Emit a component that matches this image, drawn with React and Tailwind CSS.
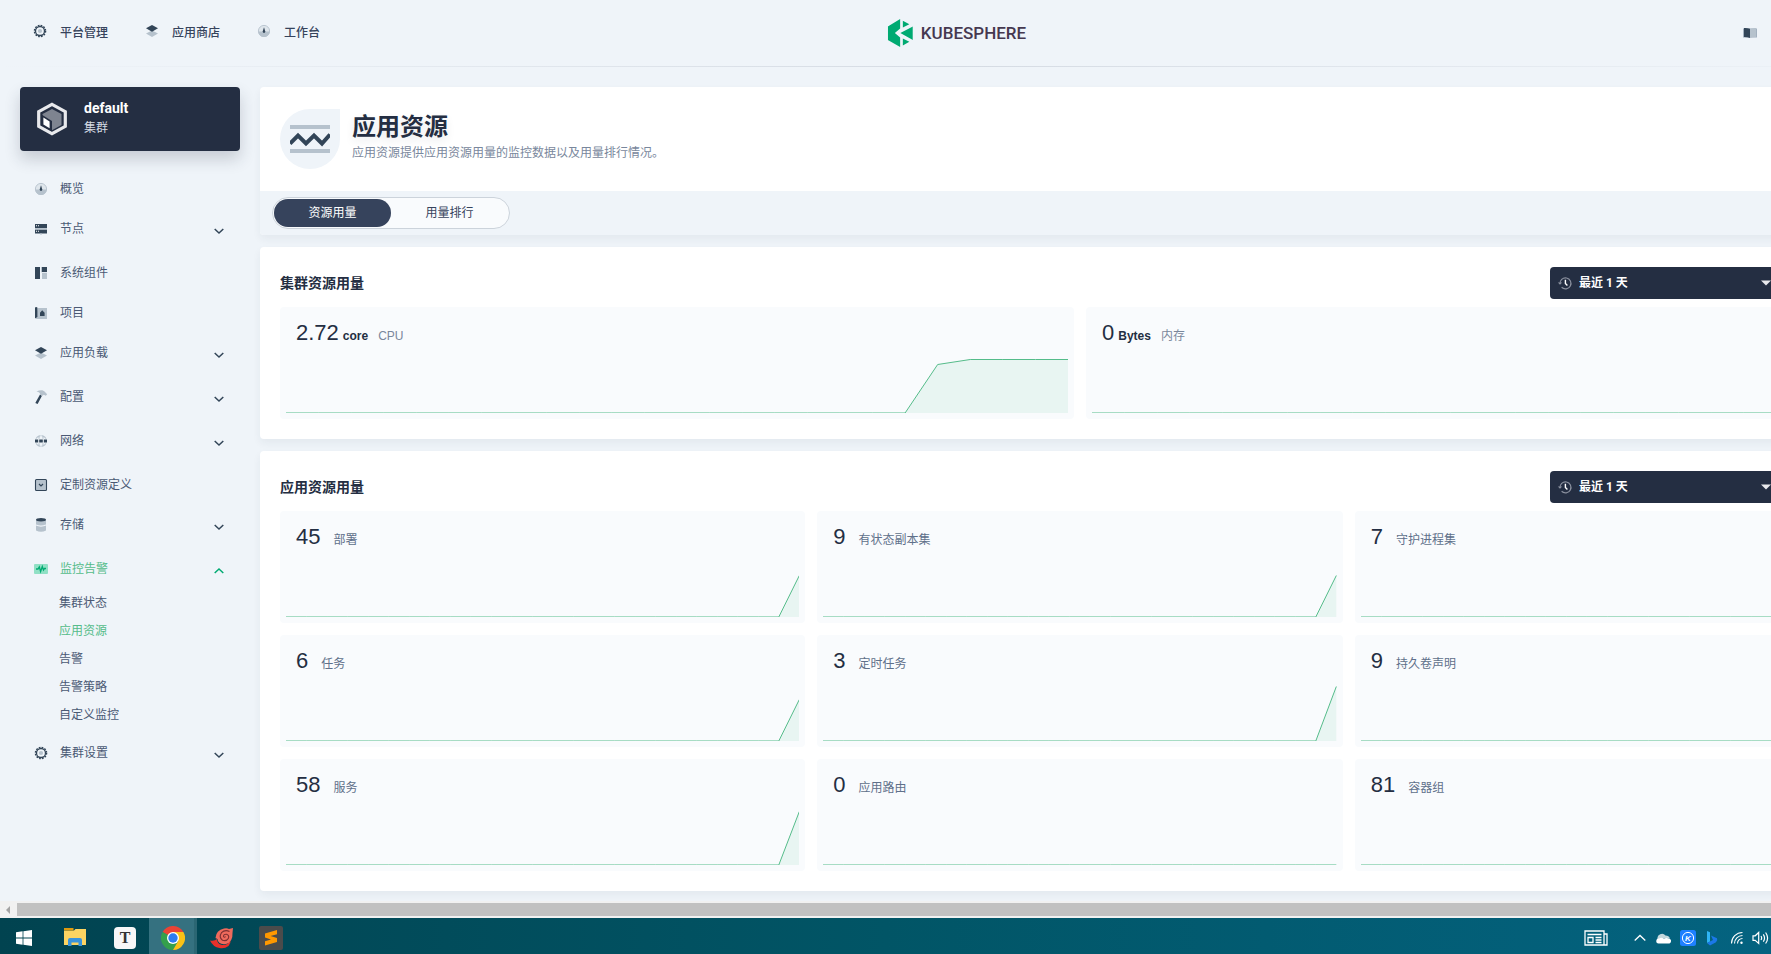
const PAGE_FONT = "font-[Roboto,'Noto_Sans_CJK_SC',sans-serif]";

/* ---------- icons ---------- */
function Gear() {
  return (
    <svg viewBox="0 0 16 16" className="size-4" aria-hidden="true">
      <circle cx="8" cy="8" r="5.6" fill="none" stroke="#324558" strokeWidth="1.4" strokeDasharray="1.7 1.23" />
      <circle cx="8" cy="8" r="4.5" fill="#eff4f9" stroke="#324558" strokeWidth="1.3" />
      <circle cx="8" cy="8" r="2.1" fill="#b6c2cd" />
    </svg>
  );
}
function Layers() {
  return (
    <svg viewBox="0 0 16 16" className="size-4" aria-hidden="true">
      <path d="M2 10.5 8 7.5l6 3L8 14z" fill="#b6c2cd" />
      <path d="M2 5.3 8 2l6 3.3L8 8.8z" fill="#324558" />
    </svg>
  );
}
function Dashboard() {
  return (
    <svg viewBox="0 0 16 16" className="size-4" aria-hidden="true">
      <circle cx="8" cy="8" r="5.6" fill="#dfe6ec" stroke="#b6c2cd" strokeWidth="0.9" />
      <path d="M2.2 8.6h11.6A5.8 5.8 0 0 1 8 14a5.8 5.8 0 0 1-5.8-5.4z" fill="#b6c2cd" />
      <path d="M8 4.2 9.3 8.6a1.3 1.3 0 1 1-2.6 0z" fill="#324558" />
    </svg>
  );
}
function Nodes() {
  return (
    <svg viewBox="0 0 16 16" className="size-4" aria-hidden="true">
      <path d="M2 3h12v4H2zM2 8.500h12v4H2z" fill="#324558" />
      <path d="M2 7h12v1.500H2zM7 12.500h2v1H7z" fill="#b6c2cd" />
      <path d="M3 4.2h1v1H3zM5 4.2h1v1H5zM3 9.800h1v1H3zM5 9.800h1v1H5z" fill="#fff" />
    </svg>
  );
}
function Components() {
  return (
    <svg viewBox="0 0 16 16" className="size-4" aria-hidden="true">
      <path d="M2 2h5v12H2zM9 2h5v5H9z" fill="#324558" />
      <path d="M7 2h2v5h5v7H9V8H7z" fill="#b6c2cd" />
      <path d="M7 2h1v12H7zM8 7.2h6v.8H8z" fill="#eff4f9" />
    </svg>
  );
}
function Project() {
  return (
    <svg viewBox="0 0 16 16" className="size-4" aria-hidden="true">
      <path d="M4.500 3H14v11H3z" fill="#b6c2cd" />
      <path d="M2 2.600q1.200-1 2.400 0V12L2 13.400zM9.200 5.200l2.400 2.600V11H7V7.800z" fill="#324558" />
    </svg>
  );
}
function Hammer() {
  return (
    <svg viewBox="0 0 16 16" className="size-4" aria-hidden="true">
      <path d="m7 5.600 2 1.200L4.600 15l-2.300-1z" fill="#324558" />
      <path d="M3.500 2.600C7 .8 10.500 1 12 3l2.200 2.200-1.400 1.600-2-1-1.800 1.200L7 5.600q.5-2-3.500-3z" fill="#b6c2cd" />
    </svg>
  );
}
function Network() {
  return (
    <svg viewBox="0 0 16 16" className="size-4" aria-hidden="true">
      <circle cx="8" cy="8" r="5.400" fill="none" stroke="#b6c2cd" strokeWidth="1.100" />
      <path d="M6 3v10M10 3v10" stroke="#b6c2cd" strokeWidth="1.100" />
      <path d="M8 1.500v13" stroke="#eff4f9" strokeWidth="1" />
      <path d="M1 8h14" stroke="#eff4f9" strokeWidth="4.600" />
      <path d="M2 6.400h3.200v3.200H2zM6.200 6.400h3.600v3.200H6.200zM10.800 6.400H14v3.200h-3.200z" fill="#324558" />
    </svg>
  );
}
function Custom() {
  return (
    <svg viewBox="0 0 16 16" className="size-4" aria-hidden="true">
      <rect x="2.500" y="2.500" width="11" height="11" rx="1" fill="#b6c2cd" stroke="#324558" strokeWidth="1.100" />
      <path d="m6 7 2 2 2-2" fill="none" stroke="#324558" strokeWidth="1.200" />
    </svg>
  );
}
function Storage() {
  return (
    <svg viewBox="0 0 16 16" className="size-4" aria-hidden="true">
      <path d="M3 3v10.500q5 2.400 10 0V3z" fill="#b6c2cd" />
      <path d="M3 8q5 2.200 10 0" fill="none" stroke="#eff4f9" strokeWidth="1.100" />
      <ellipse cx="8" cy="2.800" rx="5" ry="1.700" fill="#324558" />
    </svg>
  );
}
function Monitor() {
  return (
    <svg viewBox="0 0 16 16" className="size-4" aria-hidden="true">
      <rect x="1" y="3" width="14" height="10" rx="1" fill="#90e0c5" />
      <path d="M3 8h2l1.300-2.200L7.600 10.500 9.300 5.500l1.200 3.500 1-1.500H13" fill="none" stroke="#00aa72" strokeWidth="1.300" />
    </svg>
  );
}
function Book() {
  return (
    <svg viewBox="0 0 16 16" className="size-4" aria-hidden="true">
      <path d="M1 3.500h14v9H1z" fill="#a3b1c0" />
      <path d="M2 3q3.500-.2 6 .8V13q-2.500-1-6-1z" fill="#324558" />
      <path d="M14 3q-3.500-.2-6 .8V13q2.500-1 6-1z" fill="#b6c2cd" />
    </svg>
  );
}
function Chevron({ up }) {
  return (
    <svg viewBox="0 0 16 16" className="size-4" fill="none" strokeWidth="1.500" aria-hidden="true">
      {up ? <path d="m3.700 10 4.300-4 4.300 4" stroke="#00aa72" /> : <path d="m3.700 6 4.300 4 4.300-4" stroke="#324558" />}
    </svg>
  );
}
function ClusterIcon() {
  return (
    <svg viewBox="0 0 32 36" className="h-9 w-8" aria-hidden="true">
      <path d="M16 3.300 29.300 10.600v14.800L16 32.700 2.700 25.400V10.600z" fill="#242e42" stroke="#e8e9ec" strokeWidth="3.200" />
      <path d="M16 8 25.500 13v11L16 29.200 6.500 24V13z" fill="#7e8490" />
      <path d="M5.500 13.500 16 20v10.500L5.500 24.500z" fill="#242e42" />
      <path d="m7.400 16.600 6.200 3.800v6.800l-6.200-3.600z" fill="#fff" />
    </svg>
  );
}
function HistoryClock() {
  return (
    <svg viewBox="0 0 16 16" className="size-4" fill="none" aria-hidden="true">
      <path d="M3 9A5.500 5.500 0 1 1 4.600 12.300" stroke="#8a909e" strokeWidth="1.200" />
      <path d="M.8 7.400h4.400L3 9.800z" fill="#8a909e" />
      <path d="M8.400 4.800v3.700l2 2" stroke="#fff" strokeWidth="1.400" />
    </svg>
  );
}

/* ---------- data ---------- */
const TOP_LINKS = [
  { label: "平台管理", Icon: Gear },
  { label: "应用商店", Icon: Layers },
  { label: "工作台", Icon: Dashboard },
];
const NAV = [
  { label: "概览", Icon: Dashboard },
  { label: "节点", Icon: Nodes, more: true },
  { label: "系统组件", Icon: Components },
  { label: "项目", Icon: Project },
  { label: "应用负载", Icon: Layers, more: true },
  { label: "配置", Icon: Hammer, more: true },
  { label: "网络", Icon: Network, more: true },
  { label: "定制资源定义", Icon: Custom },
  { label: "存储", Icon: Storage, more: true },
  {
    label: "监控告警",
    Icon: Monitor,
    more: true,
    open: true,
    children: ["集群状态", "应用资源", "告警", "告警策略", "自定义监控"],
  },
  { label: "集群设置", Icon: Gear, more: true },
];
const flat = (n) => Array(n).fill(0);
const CLUSTER_STATS = [
  { value: "2.72", unit: "core", label: "CPU", points: [...flat(20), 48.5, 53.5, 53.5, 53.5, 53.5] },
  { value: "0", unit: "Bytes", label: "内存", points: flat(25) },
];
const APP_STATS = [
  { value: "45", label: "部署", points: [...flat(25), 41.5] },
  { value: "9", label: "有状态副本集", points: [...flat(25), 41.5] },
  { value: "7", label: "守护进程集", points: [...flat(25), 41.5] },
  { value: "6", label: "任务", points: [...flat(25), 41.5] },
  { value: "3", label: "定时任务", points: [...flat(25), 54.5] },
  { value: "9", label: "持久卷声明", points: [...flat(25), 41.5] },
  { value: "58", label: "服务", points: [...flat(25), 53.5] },
  { value: "0", label: "应用路由", points: flat(26) },
  { value: "81", label: "容器组", points: [...flat(25), 53.5] },
];

/* ---------- pieces ---------- */
function Sparkline({ points }) {
  const step = 100 / (points.length - 1);
  const line = points.map((v, i) => `${i * step},${60 - v}`).join(" ");
  return (
    <svg viewBox="0 0 100 60" preserveAspectRatio="none" className="h-[60px] w-full overflow-hidden" aria-hidden="true">
      <polygon points={`0,60 ${line} 100,60`} fill="#e8f5f2" />
      <polyline points={line} fill="none" stroke="#55bc8a" strokeWidth="1" vectorEffect="non-scaling-stroke" />
    </svg>
  );
}

function StatCard({ value, unit, label, points }) {
  return (
    <div className="flex h-28 flex-col justify-between rounded-sm bg-[#f9fbfd] px-1.5 pt-3 pb-1.5">
      <div className="flex items-baseline px-2.5 font-['Liberation_Sans','Noto_Sans_CJK_SC',sans-serif] text-xs">
        <span className="text-[22px] leading-7 text-[#242e42]">{value}</span>
        {unit && <span className="ml-1 font-bold text-[#242e42]">{unit}</span>}
        <span className={unit ? "ml-2.5 text-[#79879c]" : "ml-[13px] text-[#5f708a]"}>{label}</span>
      </div>
      <Sparkline points={points} />
    </div>
  );
}

function Panel({ title, id, stats, columns }) {
  return (
    <section className="rounded bg-white p-5 shadow-[0_4px_8px_0_rgba(36,46,66,0.06)]">
      <div className="mb-2 flex items-center justify-between">
        <h2 className="text-sm font-bold text-[#242e42]">{title}</h2>
        <label htmlFor={id} className="flex h-8 w-[330px] items-center gap-1.5 rounded bg-[#242e42] pr-[109px] pl-[7px]">
          <HistoryClock />
          <select id={id} aria-label={`${title}时间范围`} className="flex-1 appearance-none bg-transparent text-xs font-bold text-white outline-none">
            <option>最近 1 天</option>
          </select>
          <svg viewBox="0 0 10 6" className="h-1.5 w-2.5" aria-hidden="true">
            <path d="M0 .5h10L5 5.500z" fill="#e8e9ec" />
          </svg>
        </label>
      </div>
      <div className={`grid gap-3 ${columns}`}>
        {stats.map((s) => (
          <StatCard key={s.label} {...s} />
        ))}
      </div>
    </section>
  );
}

function Sidebar() {
  return (
    <aside className="w-[220px] shrink-0">
      <button className="flex h-16 w-full items-center gap-4 rounded bg-[#242e42] pl-4 text-left shadow-[0_8px_16px_0_rgba(36,46,66,0.2)]">
        <ClusterIcon />
        <span className="flex flex-col pb-0.5">
          <span className="text-sm leading-5 font-bold text-white">default</span>
          <span className="text-xs leading-5 text-[#d5dbe3]">集群</span>
        </span>
      </button>
      <nav className="mt-[18px] text-xs text-[#4a5974]">
        {NAV.map(({ label, Icon, more, open, children }) => (
          <div key={label}>
            <a href="#" className={`flex items-center px-[13px] ${open ? "h-10 text-[#55bc8a]" : more ? "h-11 pb-1" : "h-10"}`}>
              <Icon />
              <span className="ml-[11px] flex-1">{label}</span>
              {more && (
                <span className="pt-1">
                  <Chevron up={open} />
                </span>
              )}
            </a>
            {children && (
              <div className="flex flex-col pb-1 pl-[39px]">
                {children.map((c) => (
                  <a key={c} href="#" className={`h-7 leading-7 ${c === "应用资源" ? "text-[#55bc8a]" : ""}`}>
                    {c}
                  </a>
                ))}
              </div>
            )}
          </div>
        ))}
      </nav>
    </aside>
  );
}

function Logo() {
  return (
    <a href="#" aria-label="KubeSphere" className="flex items-center gap-2">
      <svg viewBox="0 0 25 28" className="h-7 w-[25px]" aria-hidden="true">
        <path d="M0 7.500 12.300 0v9.500L7 14l5.300 4.500V28L0 21z" fill="#00aa72" />
        <path d="M15 1.700 21.500 5.300 15 8.500zM25 7.500v13.500L12.500 14zM15 19.500l6.500 3.200L15 26.500z" fill="#00aa72" />
      </svg>
      <span className="font-['Liberation_Sans_Narrow',Roboto,sans-serif] text-[17px] leading-7 font-medium text-[#453850]">KUBESPHERE</span>
    </a>
  );
}

function TopBar() {
  return (
    <header className="relative flex h-[67px] items-center justify-between pr-[162px] pb-0.5 pl-8">
      <nav className="flex gap-9 text-xs font-medium text-[#36435c]">
        {TOP_LINKS.map(({ label, Icon }) => (
          <a key={label} href="#" className="flex items-start gap-3">
            <Icon />
            <span className="leading-5">{label}</span>
          </a>
        ))}
      </nav>
      <div className="absolute left-1/2 -translate-x-1/2 pr-1.5">
        <Logo />
      </div>
      <a href="#" aria-label="文档">
        <Book />
      </a>
      <div className="absolute inset-x-0 bottom-0 h-px bg-linear-to-r from-transparent via-[#d5dbe3] to-transparent" />
    </header>
  );
}

function PageHeader() {
  return (
    <section className="overflow-hidden rounded bg-white shadow-[0_4px_8px_0_rgba(36,46,66,0.06)]">
      <div className="flex h-[104px] items-center gap-3 px-5">
        <div className="flex size-[60px] items-center justify-center rounded-full rounded-tr-none bg-[#eff4f9]">
          <svg viewBox="0 0 40 40" className="size-10" aria-hidden="true">
            <path d="M0 6h40v4H0zM0 30h40v4H0z" fill="#b6c2cd" />
            <path d="m0 24.500 8-8 8 8 8-8 8 8 8-9" fill="none" stroke="#324558" strokeWidth="4" />
          </svg>
        </div>
        <div className="pb-1">
          <h1 className="text-2xl leading-8 font-bold text-[#242e42] [text-shadow:0_4px_8px_rgba(36,46,66,0.1)]">应用资源</h1>
          <p className="text-xs leading-5 text-[#79879c]">应用资源提供应用资源用量的监控数据以及用量排行情况。</p>
        </div>
      </div>
      <div className="flex h-11 items-center bg-[#eff4f9] px-3">
        <div className="flex h-8 items-center rounded-full border border-[#ccd3db] bg-[#f9fbfd] px-px text-xs text-[#36435c]">
          <button className="h-7 w-[117px] rounded-full bg-[#36435c] text-white">资源用量</button>
          <button className="h-7 w-[117px] rounded-full">用量排行</button>
        </div>
      </div>
    </section>
  );
}

function HorizontalScrollbar() {
  return (
    <div className="flex h-[17px] shrink-0 items-center bg-[#f1f1f1]" aria-hidden="true">
      <svg viewBox="0 0 17 14" className="h-[14px] w-[17px]">
        <path d="M10 3v8L6 7z" fill="#a3a3a3" />
      </svg>
      <div className="h-[13px] flex-1 bg-[#c1c1c1]" />
    </div>
  );
}

function Taskbar() {
  return (
    <footer className="flex h-9 shrink-0 items-center justify-between bg-linear-to-r from-[#014350] via-[#015566] to-[#046380]">
      <div className="flex h-full items-center">
        <button aria-label="开始" className="flex h-full w-12 items-center justify-center pt-1">
          <svg viewBox="0 0 16 16" className="size-4" fill="#fff">
            <path d="M0 2.300 6.600 1.300v6.300H0zM7.400 1.200 16 0v7.600H7.400zM0 8.400h6.600v6.300L0 13.700zM7.400 8.400H16V16l-8.600-1.200z" />
          </svg>
        </button>
        <button aria-label="文件资源管理器" className="flex h-full w-[54px] items-center justify-center pt-0.5">
          <svg viewBox="0 0 22 18" className="h-[18px] w-[22px]">
            <path d="M0 2.500h10L11.500 1H22v16H0z" fill="#fcd462" />
            <path d="M0 0h9.500v2.500H0z" fill="#dd9a10" />
            <path d="M4 12q0-2 2-2h10q2 0 2 2v6h-3.500v-3.500h-7V18H4z" fill="#3a94dc" />
          </svg>
        </button>
        <button aria-label="Typora" className="flex h-full w-[46px] items-center justify-center pt-1">
          <span className="flex size-[22px] items-center justify-center rounded bg-[#f7f7f7] font-['Liberation_Serif',serif] text-base leading-none font-bold text-[#333]">T</span>
        </button>
        <button aria-label="Chrome" className="ml-px flex h-full w-12 items-center justify-center border-r-3 border-[#2b6673] bg-[#357180] pt-1 pl-0.5">
          <svg viewBox="0 0 24 24" className="size-6">
            <path d="M12 12 1.600 6A12 12 0 0 1 22.400 6z" fill="#ea4335" />
            <path d="M12 12 1.600 6A12 12 0 0 0 12 24l5.200-9z" fill="#34a04c" />
            <path d="M12 6h10.400A12 12 0 0 1 12 24l5.200-9z" fill="#fbc116" />
            <circle cx="12" cy="12" r="6" fill="#fff" />
            <circle cx="12" cy="12" r="4.700" fill="#2d7cf0" />
          </svg>
        </button>
        <button aria-label="远程终端" className="flex h-full w-[50px] items-center justify-center pt-1">
          <svg viewBox="0 0 24 22" className="h-[22px] w-6" fill="none">
            <path d="M0 13.500q4.500 1 7-1.500 0 5 5 6 6 .5 8.500-5 .5 3-2 6-4 3-9 2Q3 20 0 13.500z" fill="#e8302a" />
            <path d="M5.500 11Q6 3 14 1.500q3-.8 5 .5l4-1-.5 5q.5 9-6.500 11-8 1-8.500-5z" fill="#ef6a5c" />
            <path d="M15.500 9.500q-1 1.500-2 0 0-2.500 3-2.300 3 1 2 4-2 3.500-6 2-4-3-1-7.500 3.500-3.500 8-1.200" stroke="#7c2f32" strokeWidth="1.100" />
          </svg>
        </button>
        <button aria-label="Sublime Text" className="flex h-full w-[46px] items-center justify-center pt-1 pl-0.5">
          <svg viewBox="0 0 24 24" className="size-6">
            <rect width="24" height="24" rx="2" fill="#4b4b4b" />
            <path d="M6 7.500 18 4v4.200L11.500 10 18 12v4L6 19.500v-4.200l6-1.800-6-2z" fill="#ff9800" />
          </svg>
        </button>
      </div>
      <div className="flex h-full items-center pt-1 pr-0.5">
        <svg viewBox="0 0 24 16" className="h-4 w-6" fill="none" stroke="#fff" strokeWidth="1.300" aria-label="资讯">
          <path d="M1 1h19v14H1zM20 4h3v11h-4M3.500 4.500h14M11.500 7.500h6M11.500 10h6M11.500 12.500h6" />
          <path d="M4 7.500h5v5H4z" />
        </svg>
        <svg viewBox="0 0 12 8" className="ml-[26px] h-2 w-3" fill="none" stroke="#fff" strokeWidth="1.300">
          <path d="m.7 6.500 5.300-5 5.300 5" />
        </svg>
        <svg viewBox="0 0 16 11" className="ml-2.5 h-[11px] w-4">
          <path d="M1.500 6a4.500 4.500 0 0 1 8-3.500q3.500 0 4.500 3z" fill="#c3d8dd" />
          <path d="M2.500 10.500a2.500 2.500 0 0 1 .5-5q2.500-1.500 5 .5 2-1.500 4.500-.5a2.600 2.600 0 0 1 1 5z" fill="#fff" />
        </svg>
        <svg viewBox="0 0 16 16" className="ml-2 size-4">
          <rect width="16" height="16" rx="2.500" fill="#1e80ff" />
          <circle cx="8" cy="8" r="5.600" fill="none" stroke="#fff" strokeWidth="1" />
          <text x="8" y="11" textAnchor="middle" fontFamily="'Liberation Sans', sans-serif" fontSize="8" fontWeight="bold" fontStyle="italic" fill="#fff">K</text>
        </svg>
        <svg viewBox="0 0 12 16" className="ml-2.5 h-4 w-3">
          <path d="M1 1l3 1.200v9.300L1 13z" fill="#2fb4f5" />
          <path d="m5 5.500 6 2.800q1 2.500-1 3.900L4 15.500 1 13l6-3z" fill="#1b78e8" />
        </svg>
        <svg viewBox="0 0 14 14" className="ml-3 size-3.5" fill="none" stroke="#fff" strokeWidth="1.100">
          <path d="M1.500 12.500A11 11 0 0 1 12.500 1.500M4.500 12.500a8 8 0 0 1 8-8M7.500 12.500a5 5 0 0 1 5-5" />
          <circle cx="11.500" cy="11.800" r="1.200" fill="#fff" stroke="none" />
        </svg>
        <svg viewBox="0 0 17 14" className="ml-2 h-3.5 w-[17px]" fill="none" stroke="#fff" strokeWidth="1.200">
          <path d="M1 4.800h2.200L6.700 1.500v11L3.200 9.300H1zM9 5q1.300 2 0 4M11.300 3.300q2.500 3.700 0 7.400M13.600 1.500q4 5.500 0 11" />
        </svg>
      </div>
    </footer>
  );
}

export default function App() {
  return (
    <div className={`flex h-screen flex-col overflow-hidden bg-[#eff4f9] ${PAGE_FONT}`}>
      <div className="min-h-0 flex-1 overflow-hidden">
        <div className="min-w-[1920px]">
          <TopBar />
          <div className="flex gap-5 px-5 pt-5">
            <Sidebar />
            <main className="flex min-w-0 flex-1 flex-col gap-3">
              <PageHeader />
              <Panel id="cluster-range" title="集群资源用量" stats={CLUSTER_STATS} columns="grid-cols-2" />
              <Panel id="app-range" title="应用资源用量" stats={APP_STATS} columns="grid-cols-3" />
            </main>
          </div>
        </div>
      </div>
      <HorizontalScrollbar />
      <Taskbar />
    </div>
  );
}
